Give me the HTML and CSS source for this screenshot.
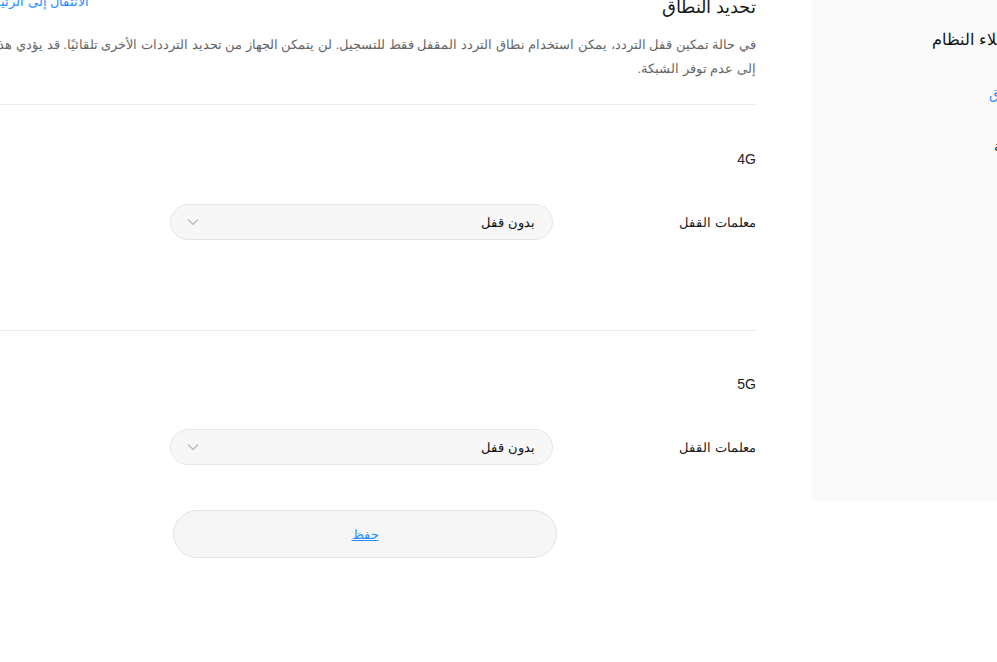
FILE: index.html
```html
<!DOCTYPE html>
<html lang="ar" dir="rtl">
<head>
<meta charset="utf-8">
<title>تحديد النطاق</title>
<link rel="stylesheet" href="styles.css">
</head>
<body>
<div class="page">
  <aside class="sidebar">
    <div class="side-title">إعدادات عملاء النظام</div>
    <a class="side-item active">تحديد النطاق</a>
    <a class="side-item plain">إعدادات الشبكة</a>
  </aside>
  <main class="main">
    <header class="head">
      <div class="head-row">
        <h1 class="title">تحديد النطاق</h1>
        <a class="home-link">الانتقال إلى الرئيسية</a>
      </div>
      <p class="desc">في حالة تمكين قفل التردد، يمكن استخدام نطاق التردد المقفل فقط للتسجيل. لن يتمكن الجهاز من تحديد الترددات الأخرى تلقائيًا. قد يؤدي هذا إلى عدم توفر الشبكة.</p>
    </header>
    <section class="band">
      <h2 class="band-name">4G</h2>
      <div class="field">
        <label class="field-label">معلمات القفل</label>
        <div class="select">
          <span>بدون قفل</span>
          <svg class="chev" width="12" height="8" viewBox="0 0 12 8"><path d="M1 1.5 L6 6.5 L11 1.5" fill="none" stroke="#b5b5b5" stroke-width="1.2"/></svg>
        </div>
      </div>
    </section>
    <section class="band last">
      <h2 class="band-name">5G</h2>
      <div class="field">
        <label class="field-label">معلمات القفل</label>
        <div class="select">
          <span>بدون قفل</span>
          <svg class="chev" width="12" height="8" viewBox="0 0 12 8"><path d="M1 1.5 L6 6.5 L11 1.5" fill="none" stroke="#b5b5b5" stroke-width="1.2"/></svg>
        </div>
      </div>
    </section>
    <div class="actions">
      <button class="save">حفظ</button>
    </div>
  </main>
</div>
</body>
</html>
```
FILE: styles.css
```css
html {
  overflow: hidden;
  background: #fff;
}
body {
  margin: 0;
  font-family: "Liberation Sans", "Noto Sans", sans-serif;
  color: #222;
}
.page {
  width: 1114px;
  margin-right: -95px;
  margin-top: -5px;
  display: flex;
  flex-direction: row;
  gap: 56px;
  align-items: flex-start;
}
.sidebar {
  width: 280px;
  flex: none;
  height: 506px;
  background: #fafafa;
  box-sizing: border-box;
  padding: 32px 8px 0 0;
  display: flex;
  flex-direction: column;
  align-items: flex-start;
}
.side-title {
  font-size: 16px;
  line-height: 26px;
  color: #111;
  white-space: nowrap;
  margin-right: 12px;
}
.side-item {
  font-size: 14px;
  line-height: 22px;
  color: #222;
  white-space: nowrap;
  margin-top: 30px;
}
.side-item.active {
  color: #2a8cff;
  margin-right: 22px;
}
.main {
  width: 778px;
  flex: none;
}
.head {
  border-bottom: 1px solid #ececec;
  padding-bottom: 23px;
}
.head-row {
  display: flex;
  justify-content: space-between;
  align-items: flex-start;
}
.title {
  margin: 0;
  font-size: 18px;
  line-height: 24px;
  font-weight: normal;
  color: #1a1a1a;
}
.home-link {
  font-size: 13px;
  line-height: 14px;
  color: #2a8cff;
}
.desc {
  margin: 14px 0 0;
  font-size: 13px;
  line-height: 24px;
  color: #666;
}
.band {
  padding: 44px 0 90px;
  border-bottom: 1px solid #ececec;
}
.band.last {
  border-bottom: none;
  padding-top: 43px;
  padding-bottom: 0;
}
.band-name {
  margin: 0;
  font-size: 14px;
  line-height: 20px;
  font-weight: normal;
  color: #222;
}
.field {
  display: flex;
  align-items: center;
  margin-top: 35px;
}
.field-label {
  width: 203px;
  flex: none;
  font-size: 13px;
  color: #222;
}
.select {
  width: 383px;
  height: 36px;
  box-sizing: border-box;
  border: 1px solid #e6e6e8;
  border-radius: 18px;
  background: #f7f7f8;
  display: flex;
  align-items: center;
  justify-content: space-between;
  padding: 0 17px 0 16px;
  font-size: 13px;
  color: #111;
}
.chev {
  display: block;
}
.actions {
  margin-top: 45px;
  padding-right: 199px;
}
.save {
  width: 384px;
  height: 48px;
  border: 1px solid #e3e3e3;
  border-radius: 24px;
  background: #f6f6f6;
  font-family: inherit;
  font-size: 13px;
  color: #2a8cff;
  text-decoration: underline;
  cursor: pointer;
}
```
